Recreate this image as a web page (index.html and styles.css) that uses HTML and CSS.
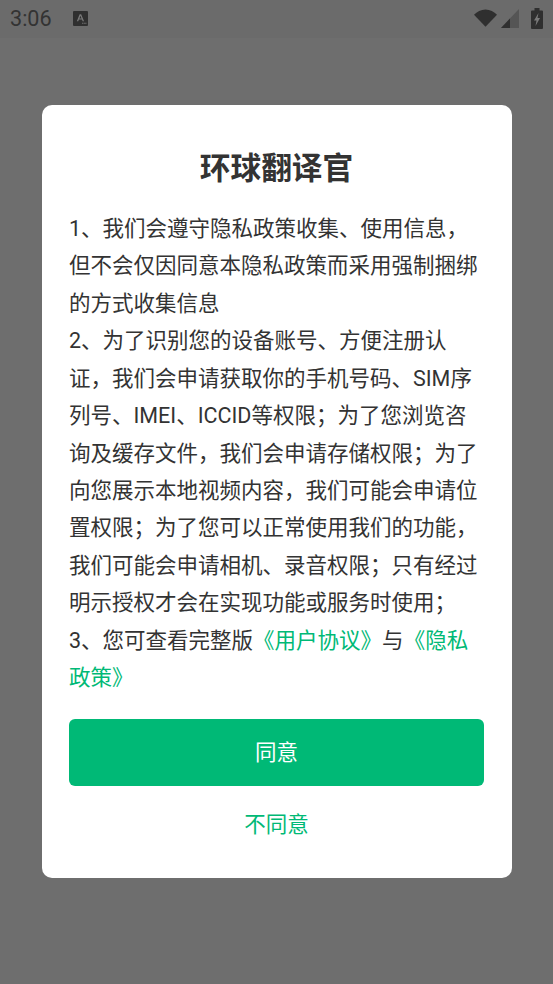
FILE: index.html
```html
<!DOCTYPE html>
<html lang="zh-CN">
<head>
<meta charset="utf-8">
<title>环球翻译官</title>
<link rel="stylesheet" href="styles.css">
</head>
<body>
<div class="status">
  <div class="status-left">
    <span class="time">3:06</span>
    <svg class="a-icon" width="15" height="15" viewBox="0 0 14 14"><rect width="14" height="14" rx="1" fill="#2f2f2f"/><path d="M3.600 9.600 6.200 3h1.400l2.700 6.600H9L8.400 8H5.500l-.6 1.600zM5.900 7h2.100L7 4.400z" fill="#7a7a7a"/><path d="M8.500 11h1v1h-1zM10 11h1v1h-1zM11.500 11h1v1h-1z" fill="#7a7a7a"/></svg>
  </div>
  <div class="status-right">
    <svg width="23" height="18" viewBox="0 0 24 18"><path d="M0 5.500C3 2.500 7.300 0 12 0s9 2.500 12 5.500L12 18z" fill="#2f2f2f"/></svg>
    <svg class="signal" width="18" height="19" viewBox="0 0 18 19"><path d="M18 0v19H0z" fill="#555"/><path d="M9 9.500V19H0z" fill="#2f2f2f"/></svg>
    <svg class="battery" width="12" height="21" viewBox="0 0 12 21"><path d="M3.500 0h5v2.500H11a1 1 0 0 1 1 1V20a1 1 0 0 1-1 1H1a1 1 0 0 1-1-1V3.500a1 1 0 0 1 1-1h2.500z" fill="#2f2f2f"/><path d="M7.500 5 3 12.500h2.500L4.500 18 9 10H6.500z" fill="#7a7a7a"/></svg>
  </div>
</div>
<main class="overlay">
  <section class="dialog">
    <h1 class="title">环球翻译官</h1>
    <p class="body-text">1、我们会遵守隐私政策收集、使用信息，但不会仅因同意本隐私政策而采用强制捆绑的方式收集信息<br>2、为了识别您的设备账号、方便注册认证，我们会申请获取你的手机号码、SIM序列号、IMEI、ICCID等权限；为了您浏览咨询及缓存文件，我们会申请存储权限；为了向您展示本地视频内容，我们可能会申请位置权限；为了您可以正常使用我们的功能，我们可能会申请相机、录音权限；只有经过明示授权才会在实现功能或服务时使用；<br>3、您可查看完整版<a class="link">《用户协议》</a>与<a class="link">《隐私政策》</a></p>
    <button class="agree">同意</button>
    <button class="disagree">不同意</button>
  </section>
</main>
</body>
</html>
```

FILE: styles.css
```css
* { box-sizing: border-box; }
html, body { margin: 0; height: 100%; }
body {
  width: 553px;
  height: 984px;
  overflow: hidden;
  background: #6e6e6e;
  display: flex;
  flex-direction: column;
  font-family: Roboto, "Noto Sans CJK SC", sans-serif;
}
.status {
  height: 38px;
  flex: none;
  display: flex;
  justify-content: space-between;
  align-items: center;
  padding: 0 10px 2px 10px;
  background: #6b6b6b;
}
.status-left { display: flex; align-items: center; gap: 21px; }
.time { font-size: 21.600px; color: #333; }
.a-icon { display: block; }
.status-right { display: flex; align-items: center; gap: 4px; }
.status-right svg { display: block; }
.battery { margin-left: 8px; }
.overlay { flex: 1; padding: 67px 41.500px 0; }
.dialog {
  width: 470px;
  height: 773px;
  background: #fff;
  border-radius: 10px;
  padding: 44px 27.500px 0 27.500px;
  display: flex;
  flex-direction: column;
  align-items: stretch;
}
.title {
  margin: 0;
  font-size: 30.700px;
  line-height: 40px;
  font-weight: 700;
  text-align: center;
  color: #333;
}
.body-text {
  margin: 21px 0 0;
  font-size: 21.500px;
  line-height: 37.420px;
  color: #333;
}
.link { color: #00b976; }
.agree {
  margin-top: 23px;
  height: 67px;
  padding: 0 0 4px;
  border: 0;
  border-radius: 6px;
  background: #00b976;
  color: #fff;
  font: inherit;
  font-size: 21.500px;
}
.disagree {
  margin-top: 16px;
  height: 40px;
  border: 0;
  background: none;
  color: #00b976;
  font: inherit;
  font-size: 21.500px;
}
```
